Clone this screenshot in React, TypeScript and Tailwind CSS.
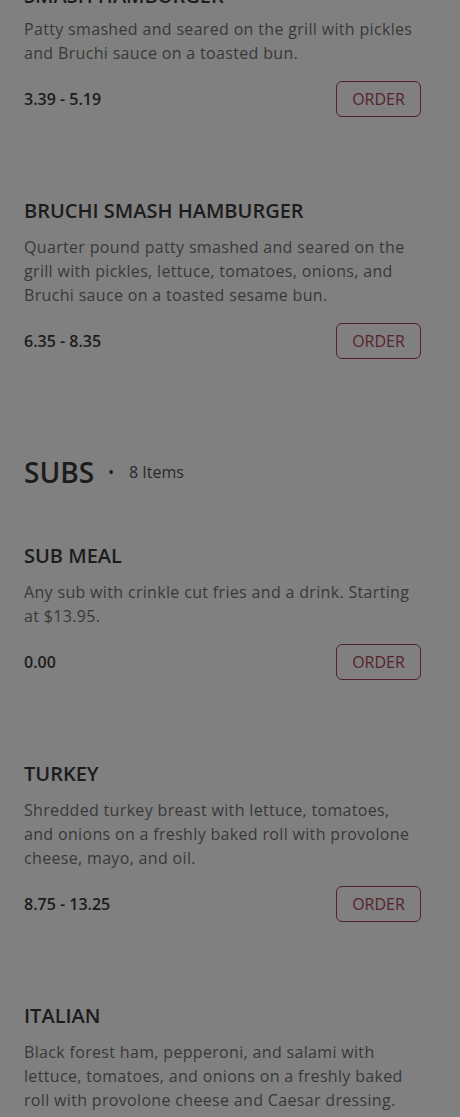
import type { ReactNode } from 'react';

type Item = {
  name: string;
  desc: string;
  price: string;
};

const burgers: Item[] = [
  {
    name: 'SMASH HAMBURGER',
    desc: 'Patty smashed and seared on the grill with pickles and Bruchi sauce on a toasted bun.',
    price: '3.39 - 5.19',
  },
  {
    name: 'BRUCHI SMASH HAMBURGER',
    desc: 'Quarter pound patty smashed and seared on the grill with pickles, lettuce, tomatoes, onions, and Bruchi sauce on a toasted sesame bun.',
    price: '6.35 - 8.35',
  },
];

const subs: Item[] = [
  {
    name: 'SUB MEAL',
    desc: 'Any sub with crinkle cut fries and a drink. Starting at $13.95.',
    price: '0.00',
  },
  {
    name: 'TURKEY',
    desc: 'Shredded turkey breast with lettuce, tomatoes, and onions on a freshly baked roll with provolone cheese, mayo, and oil.',
    price: '8.75 - 13.25',
  },
  {
    name: 'ITALIAN',
    desc: 'Black forest ham, pepperoni, and salami with lettuce, tomatoes, and onions on a freshly baked roll with provolone cheese and Caesar dressing.',
    price: '7.95 - 12.45',
  },
];

function MenuItem({ item, first, tight }: { item: Item; first?: boolean; tight?: boolean }): ReactNode {
  return (
    <div className={first ? '' : 'mt-20'}>
      <h3 className="text-[20px] leading-[28px] font-semibold text-[#1c1c1c]">{item.name}</h3>
      <p
        className={`${tight ? 'mt-[7px]' : 'mt-[10px]'} text-base leading-6 tracking-[0.33px] text-[#383838]`}
      >
        {item.desc}
      </p>
      <div className="mt-4 flex items-center justify-between">
        <span className="text-base font-semibold text-[#1c1c1c]">{item.price}</span>
        <button
          type="button"
          className="h-9 w-[85px] rounded-md border border-[#512029] text-base leading-none text-[#56222e]"
        >
          ORDER
        </button>
      </div>
    </div>
  );
}

export default function App(): ReactNode {
  return (
    <div className="h-[1117px] overflow-hidden bg-[#808080] font-['Open_Sans',sans-serif]">
      {/* list is scrolled: the first item's title is mostly above the fold */}
      <div className="-mt-[18px] w-[421px] pl-6">
        {burgers.map((b, i) => (
          <MenuItem key={b.name} item={b} first={i === 0} tight={i === 0} />
        ))}

        <div className="mt-[95px] flex items-center">
          <h2 className="text-[28px] leading-9 font-semibold text-[#1c1c1c]">SUBS</h2>
          <span className="ml-[14px] text-base text-[#1c1c1c]">•</span>
          <span className="ml-[15px] text-base text-[#2a2a2a]">8 Items</span>
        </div>

        <div className="mt-[52px]">
          {subs.map((s, i) => (
            <MenuItem key={s.name} item={s} first={i === 0} />
          ))}
        </div>
      </div>
    </div>
  );
}
